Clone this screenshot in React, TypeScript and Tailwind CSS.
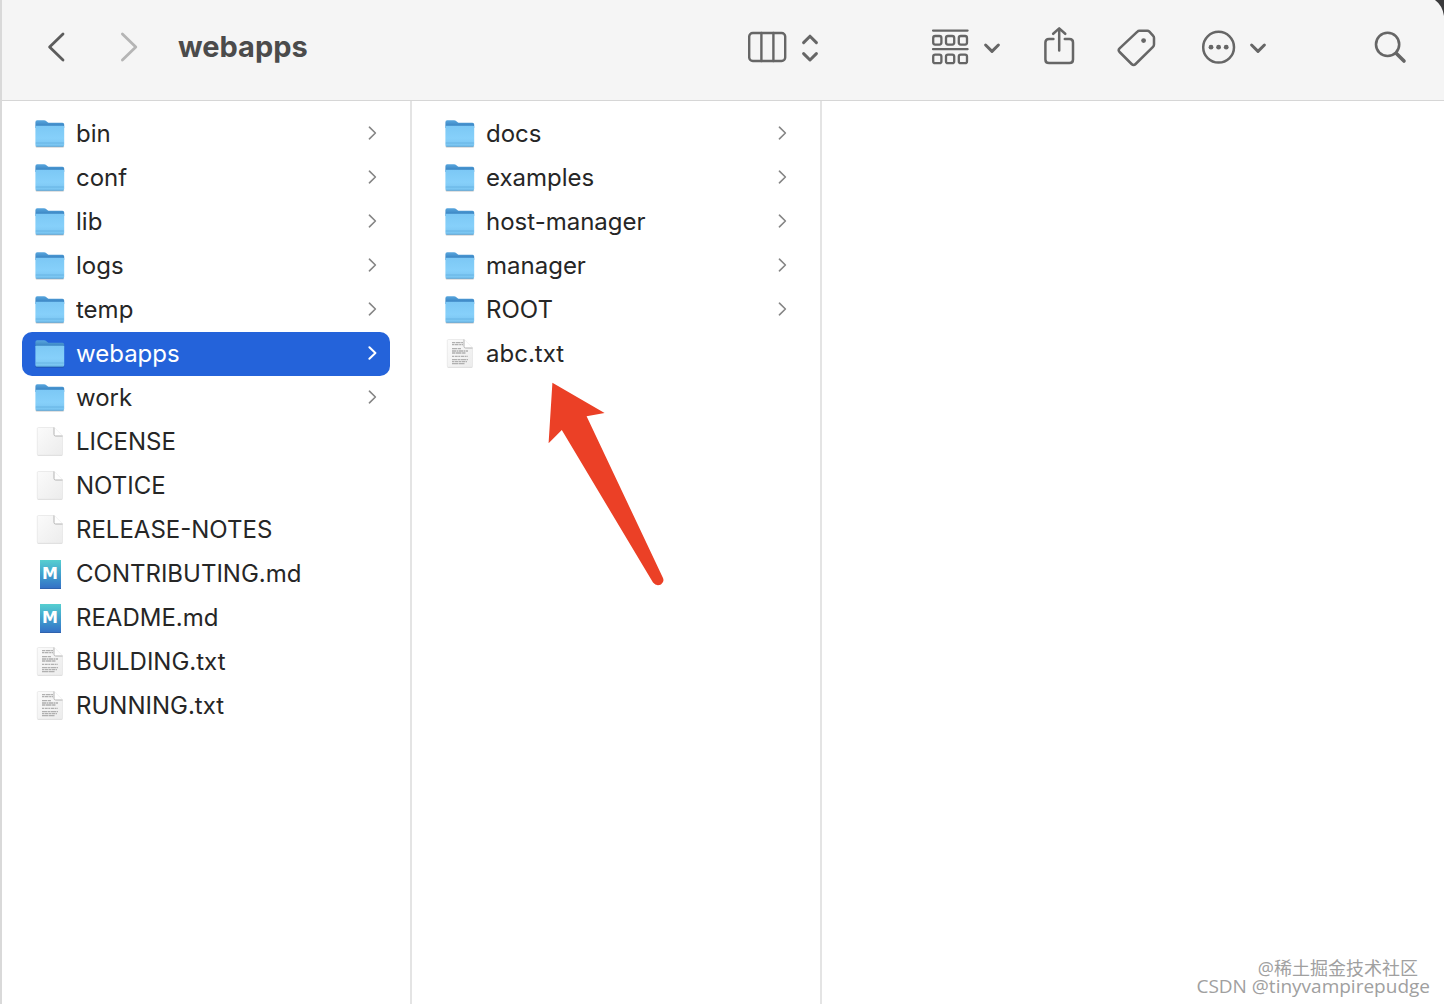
import type { ReactNode } from "react";

type Kind = "folder" | "blank" | "markdown" | "text";

type Entry = {
  name: string;
  kind: Kind;
  selected?: boolean;
};

const tomcatEntries: Entry[] = [
  { name: "bin", kind: "folder" },
  { name: "conf", kind: "folder" },
  { name: "lib", kind: "folder" },
  { name: "logs", kind: "folder" },
  { name: "temp", kind: "folder" },
  { name: "webapps", kind: "folder", selected: true },
  { name: "work", kind: "folder" },
  { name: "LICENSE", kind: "blank" },
  { name: "NOTICE", kind: "blank" },
  { name: "RELEASE-NOTES", kind: "blank" },
  { name: "CONTRIBUTING.md", kind: "markdown" },
  { name: "README.md", kind: "markdown" },
  { name: "BUILDING.txt", kind: "text" },
  { name: "RUNNING.txt", kind: "text" },
];

const webappsEntries: Entry[] = [
  { name: "docs", kind: "folder" },
  { name: "examples", kind: "folder" },
  { name: "host-manager", kind: "folder" },
  { name: "manager", kind: "folder" },
  { name: "ROOT", kind: "folder" },
  { name: "abc.txt", kind: "text" },
];

function FolderIcon() {
  return (
    <svg viewBox="0 0 32 32" className="size-8 shrink-0" aria-hidden="true">
      <defs>
        <linearGradient id="folder-front" x1="0" y1="0" x2="0" y2="1">
          <stop offset="0" stopColor="#7cc8f5" />
          <stop offset="0.6" stopColor="#86d0fa" />
          <stop offset="1" stopColor="#78c3f0" />
        </linearGradient>
        <linearGradient id="folder-back" x1="0" y1="0" x2="0" y2="1">
          <stop offset="0" stopColor="#58a6de" />
          <stop offset="0.7" stopColor="#3b86c4" />
        </linearGradient>
      </defs>
      <rect x="1.5" y="27" width="28.6" height="2.8" rx="1.4" fill="#000" opacity="0.16" />
      <path
        d="M1.4 4.2Q1.4 2.3 3.2 2.3H10Q11.4 2.3 12.4 3.2L13.6 4.2Q14.4 4.8 15.6 4.8H28.4Q30.2 4.8 30.2 6.6V10H1.4Z"
        fill="url(#folder-back)"
      />
      <path d="M1.4 8.6Q1.4 7.8 2.4 7.8H29.2Q30.2 7.8 30.2 8.6V27Q30.2 28.6 28.6 28.6H3Q1.4 28.6 1.4 27Z" fill="url(#folder-front)" />
      <path d="M1.8 25H29.8" stroke="#63aee0" strokeWidth="0.8" />
      <path d="M2.2 28.3H29.4" stroke="#569fd0" strokeWidth="0.8" />
    </svg>
  );
}

function PageIcon({ lines }: { lines?: boolean }) {
  return (
    <svg viewBox="0 0 32 32" className="size-8 shrink-0" aria-hidden="true">
      <defs>
        <linearGradient id="page-paper" x1="0" y1="0" x2="1" y2="1">
          <stop offset="0" stopColor="#fbfbfb" />
          <stop offset="1" stopColor="#ececec" />
        </linearGradient>
      </defs>
      <rect x="3.5" y="28.2" width="25" height="1.8" rx="0.9" fill="#000" opacity="0.14" />
      <path
        d="M4.5 1.5H20L28.5 10V28Q28.5 29.2 27.3 29.2H4.5Q3.3 29.2 3.3 28V2.7Q3.3 1.5 4.5 1.5Z"
        fill="url(#page-paper)"
        stroke="#e4e4e4"
        strokeWidth="0.7"
      />
      {lines && (
        <g stroke="#b0b0b0" strokeWidth="1.3" fill="none">
          <path d="M8 4.6H19" strokeDasharray="3 0.6 5 0.5" />
          <path d="M8 6.6H19" strokeDasharray="2 0.5 4 0.7" />
          <path d="M8 10.6H17" strokeDasharray="5 0.6" />
          <path d="M8 13H24" strokeDasharray="4 0.5 2 0.5" />
          <path d="M8 15H22" strokeDasharray="3 0.5 6 0.6" />
          <path d="M8 18.4H24" strokeDasharray="2 0.7 3 0.6" />
          <path d="M8 21.6H24" strokeDasharray="5 0.5 3 0.5" />
          <path d="M8 23.6H23" strokeDasharray="2 0.5 4 0.5" />
          <path d="M8 25.6H21" strokeDasharray="6 0.5" />
        </g>
      )}
      <path d="M20 1.5L28.5 10H21.6Q20 10 20 8.4Z" fill="#fff" />
      <path d="M20 1.5V8.4Q20 10 21.6 10H28.5" fill="none" stroke="#ababab" strokeWidth="0.9" />
    </svg>
  );
}

function MarkdownIcon() {
  return (
    <span className="flex size-8 shrink-0 items-center justify-center" aria-hidden="true">
      <span className="flex h-[29px] w-[21px] items-center justify-center border-b border-[#2f62ad] bg-linear-to-b from-[#56cfd0] to-[#3572c6] font-['DejaVu_Sans',sans-serif] text-base leading-none font-bold text-white">
        M
      </span>
    </span>
  );
}

function EntryIcon({ kind }: { kind: Kind }) {
  if (kind === "folder") return <FolderIcon />;
  if (kind === "markdown") return <MarkdownIcon />;
  return <PageIcon lines={kind === "text"} />;
}

function Row({ entry }: { entry: Entry }) {
  return (
    <li>
      <button
        type="button"
        className={`flex h-11 w-full items-center gap-2.5 rounded-[10px] px-3 text-left text-2xl ${
          entry.selected ? "bg-[#2463da] text-white" : "text-[#262626]"
        }`}
      >
        <EntryIcon kind={entry.kind} />
        <span className="flex-1 truncate">{entry.name}</span>
        {entry.kind === "folder" && (
          <svg
            viewBox="0 0 10 16"
            className={`mb-0.5 h-4 w-2.5 ${entry.selected ? "text-white" : "text-[#858585]"}`}
            fill="none"
            stroke="currentColor"
            strokeWidth={entry.selected ? 2 : 1.6}
            strokeLinecap="round"
            strokeLinejoin="round"
            aria-hidden="true"
          >
            <path d="M1.4 2.2L7.4 8L1.4 13.8" />
          </svg>
        )}
      </button>
    </li>
  );
}

function Column({ entries, children }: { entries: Entry[]; children?: ReactNode }) {
  return (
    <section className="relative w-[410px] shrink-0 border-r-2 border-[#e4e4e4] px-5 pt-[11px]">
      <ul>
        {entries.map((entry) => (
          <Row key={entry.name} entry={entry} />
        ))}
      </ul>
      {children}
    </section>
  );
}

function ToolButton({ label, children }: { label: string; children: ReactNode }) {
  return (
    <button type="button" aria-label={label} className="flex shrink-0 items-center text-[#666666]">
      {children}
    </button>
  );
}

function ChevronDown() {
  return (
    <svg
      viewBox="0 0 18 40"
      className="h-10 w-[18px]"
      fill="none"
      stroke="currentColor"
      strokeWidth="3"
      strokeLinecap="round"
      strokeLinejoin="round"
    >
      <path d="M2.6 18L9 24.4L15.4 18" />
    </svg>
  );
}

function Toolbar() {
  return (
    <header className="flex h-[101px] items-center border-b border-[#d6d6d6] bg-[#f5f5f5] pr-9 pb-1.5 pl-11">
      <div className="flex gap-[52px]">
        <ToolButton label="Back">
          <svg viewBox="0 0 20 40" className="h-10 w-5" fill="none" stroke="#5c5c5c" strokeWidth="2.8" strokeLinecap="round" strokeLinejoin="round">
            <path d="M17 7L3.6 20L17 33" />
          </svg>
        </ToolButton>
        <ToolButton label="Forward">
          <svg viewBox="0 0 20 40" className="h-10 w-5" fill="none" stroke="#b5b5b5" strokeWidth="2.8" strokeLinecap="round" strokeLinejoin="round">
            <path d="M4.4 7L17.8 20L4.4 33" />
          </svg>
        </ToolButton>
      </div>

      <h1 className="ml-10 flex-1 truncate text-[29px] leading-10 font-bold text-[#4b4b4b]">webapps</h1>

      <ToolButton label="View as columns">
        <svg viewBox="0 0 72 40" className="h-10 w-[72px]" fill="none" stroke="currentColor" strokeLinecap="round" strokeLinejoin="round">
          <rect x="2.2" y="6" width="36" height="28" rx="3.6" strokeWidth="2.4" />
          <path d="M14.4 6V34M26.4 6V34" strokeWidth="2.4" />
          <path d="M56.6 15.6L63 9.2L69.4 15.6M56.6 26.6L63 33L69.4 26.6" strokeWidth="3" />
        </svg>
      </ToolButton>

      <div className="ml-28 flex gap-[42px]">
        <ToolButton label="Group items">
          <svg viewBox="0 0 40 40" className="mr-3 size-10" fill="none" stroke="currentColor" strokeLinecap="round">
            <path d="M2 3.6H36.6M2 22.2H36.6" strokeWidth="2.2" />
            <g strokeWidth="2.3">
              <rect x="2.2" y="9" width="8.2" height="8.6" rx="2" />
              <rect x="15" y="9" width="8.2" height="8.6" rx="2" />
              <rect x="27.8" y="9" width="8.2" height="8.6" rx="2" />
              <rect x="2.2" y="27.6" width="8.2" height="8.6" rx="2" />
              <rect x="15" y="27.6" width="8.2" height="8.6" rx="2" />
              <rect x="27.8" y="27.6" width="8.2" height="8.6" rx="2" />
            </g>
          </svg>
          <ChevronDown />
        </ToolButton>
        <ToolButton label="Share">
          <svg viewBox="0 0 32 40" className="h-10 w-8" fill="none" stroke="currentColor" strokeWidth="2.5" strokeLinecap="round" strokeLinejoin="round">
            <path d="M10.4 12H6Q2.4 12 2.4 15.4V32.4Q2.4 36 6 36H26.4Q30 36 30 32.4V15.4Q30 12 26.4 12H21.8" />
            <path d="M16.2 23.4V1.6M10.2 6.8L16.2 1.4L22.2 6.8" />
          </svg>
        </ToolButton>
        <ToolButton label="Edit tags">
          <svg viewBox="0 0 40 40" className="size-10" fill="none" stroke="currentColor" strokeWidth="2.5" strokeLinecap="round" strokeLinejoin="round">
            <path d="M19.6 4.6Q20.4 3.8 21.6 3.8H29.6Q30.8 3.8 31.6 4.6L35.4 8.8Q36.2 9.6 36.2 10.8V17.4Q36.2 18.8 35.2 19.8L17.8 37Q15.8 39 13.8 37L1.8 25Q0 23.2 1.8 21.4Z" transform="translate(0.8 0)" />
            <circle cx="26.6" cy="13.6" r="2.4" fill="currentColor" stroke="none" />
          </svg>
        </ToolButton>
        <ToolButton label="More actions">
          <svg viewBox="0 0 40 40" className="mr-2.5 size-10" fill="none" stroke="currentColor" strokeWidth="2.5">
            <circle cx="19.6" cy="20.2" r="15.4" />
            <g fill="currentColor" stroke="none">
              <circle cx="12" cy="20.2" r="2.4" />
              <circle cx="19.6" cy="20.2" r="2.4" />
              <circle cx="27.2" cy="20.2" r="2.4" />
            </g>
          </svg>
          <ChevronDown />
        </ToolButton>
      </div>

      <div className="ml-[105px] flex">
        <ToolButton label="Search">
          <svg viewBox="0 0 36 40" className="h-10 w-9" fill="none" stroke="currentColor" strokeLinecap="round">
            <circle cx="15.6" cy="17.4" r="11.6" strokeWidth="2.6" />
            <path d="M24.4 26.4L32 34" strokeWidth="3.6" />
          </svg>
        </ToolButton>
      </div>
    </header>
  );
}

export default function App() {
  return (
    <div className="relative flex min-h-screen flex-col border-l-2 border-[#d9d9d9] bg-white font-['Inter',sans-serif]">
      <Toolbar />
      <main className="flex flex-1">
        <Column entries={tomcatEntries} />
        <Column entries={webappsEntries}>
          <svg viewBox="0 0 120 206" className="absolute top-[280px] left-[134px] h-[206px] w-[120px]" fill="#eb4026" aria-hidden="true">
            <path d="M6.4 1.8L58.6 32L40.6 35.2L117 197Q118.6 201 115 203.4Q110.4 205.6 107 201.6L15.8 49L2.6 62.2Z" />
          </svg>
        </Column>
        <section className="flex-1" />
      </main>

      {/* corner of the desktop behind the window */}
      <svg viewBox="0 0 12 18" className="absolute top-0 right-0 h-[18px] w-3" fill="#3a3a3c" aria-hidden="true">
        <path d="M3 0H12V16Q10.5 5.5 3 0Z" />
      </svg>

      <div className="absolute right-3.5 bottom-2 flex flex-col items-end leading-4 text-[#a0a0a0] font-['Open_Sans','Noto_Sans_CJK_SC',sans-serif]">
        <p className="mr-3 text-lg leading-4">@稀土掘金技术社区</p>
        <p className="text-[19px] leading-5">CSDN @tinyvampirepudge</p>
      </div>
    </div>
  );
}
